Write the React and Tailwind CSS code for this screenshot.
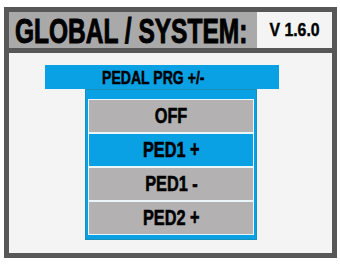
// App.jsx — GLOBAL / SYSTEM screen, pedal program selector

const FONT = { fontFamily: '"Liberation Sans", Arial, sans-serif' }

const OPTIONS = ['OFF', 'PED1 +', 'PED1 -', 'PED2 +']
const SELECTED = 1

function OptionRow({ label, active }) {
  return (
    <div className={`h-[32px] flex items-center justify-center ${active ? 'bg-[#0aa0e4]' : 'bg-[#b3b1b1]'}`}>
      <span className="inline-block whitespace-nowrap text-[22px] font-bold text-black leading-none scale-x-[0.74] [-webkit-text-stroke:0.6px_black]">{label}</span>
    </div>
  )
}

export default function App() {
  return (
    <div className="w-[340px] h-[265px] bg-white pt-[7px] pl-[4px]" style={FONT}>
      <div className="w-[333px] h-[251px] border-[5px] border-[#575757] bg-[#f4f4f4] flex flex-col">
        {/* Header */}
        <div className="h-[41px] flex border-b-[5px] border-[#575757]">
          <div className="flex-1 bg-[#a9a9a9] flex items-center pl-[6px] overflow-hidden">
            <span className="inline-block whitespace-nowrap text-[35px] font-bold text-black leading-none scale-x-[0.7] origin-left [-webkit-text-stroke:1px_black]">GLOBAL / SYSTEM:</span>
          </div>
          <div className="w-[75px] bg-[#f4f4f4] flex items-center justify-center">
            <span className="inline-block whitespace-nowrap text-[18px] font-bold text-black leading-none scale-x-[0.88] [-webkit-text-stroke:0.4px_black]">V 1.6.0</span>
          </div>
        </div>

        {/* Menu */}
        <div className="mt-[12px] ml-[36px] w-[234px] h-[24px] bg-[#0aa0e4] flex items-center pl-[57px] overflow-hidden">
          <span className="inline-block whitespace-nowrap text-[19px] font-bold text-black leading-none scale-x-[0.74] origin-left [-webkit-text-stroke:0.5px_black]">PEDAL PRG +/-</span>
        </div>
        <div className="ml-[76px] w-[172px] bg-[#0aa0e4] border border-[#1a8fb8] pt-[9px] pb-[4px] px-[2px]">
          <div className="bg-[#eaf6fa] p-[1px] flex flex-col gap-[2px]">
            {OPTIONS.map((o, i) => (
              <OptionRow key={o} label={o} active={i === SELECTED} />
            ))}
          </div>
        </div>
      </div>
    </div>
  )
}
